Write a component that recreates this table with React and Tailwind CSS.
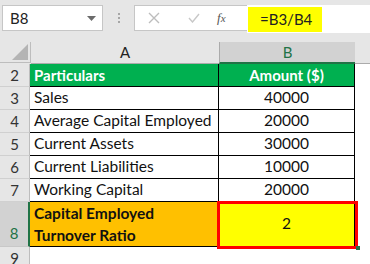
import React from "react";

const rows = [
  { n: "3", a: "Sales", b: "40000" },
  { n: "4", a: "Average Capital Employed", b: "20000" },
  { n: "5", a: "Current Assets", b: "30000" },
  { n: "6", a: "Current Liabilities", b: "10000" },
  { n: "7", a: "Working Capital", b: "20000" },
];

export default function App() {
  return (
    <div
      className="relative w-[370px] h-[264px] overflow-hidden bg-white text-black"
      style={{ fontFamily: "Lato, 'Open Sans', sans-serif" }}
    >
      {/* Top formula bar */}
      <div className="h-[42px] bg-[#e6e6e6] flex items-start pt-[5px]">
        <div className="ml-[2px] w-[101px] h-[26px] bg-white border border-[#c6c6c6] flex items-center justify-between pl-[7px] pr-[6px]">
          <span className="text-[15px] text-[#222] leading-none">B8</span>
          <svg width="9" height="5" viewBox="0 0 9 5">
            <path d="M0 0 L9 0 L4.5 5 Z" fill="#6b6b6b" />
          </svg>
        </div>
        <div className="w-[31px] h-[26px] flex flex-col items-center justify-center gap-[2px]">
          <div className="w-[2px] h-[2px] bg-[#a6a6a6]" />
          <div className="w-[2px] h-[2px] bg-[#a6a6a6]" />
          <div className="w-[2px] h-[2px] bg-[#a6a6a6]" />
        </div>
        <div className="w-[113px] h-[26px] bg-white border border-[#c6c6c6] border-r-0 flex items-center">
          <svg width="12" height="12" viewBox="0 0 12 12" className="ml-[13px]">
            <path d="M1 1 L11 11 M11 1 L1 11" stroke="#bdbdbd" strokeWidth="1.4" />
          </svg>
          <svg width="12" height="10" viewBox="0 0 12 10" className="ml-[28px]">
            <path d="M1 5 L4.5 9 L11 1" stroke="#c8c8c8" strokeWidth="1.4" fill="none" />
          </svg>
          <span
            className="ml-[17px] text-[13px] italic text-[#555]"
            style={{ fontFamily: "'Liberation Serif', serif" }}
          >
            f<span className="text-[11px]">x</span>
          </span>
        </div>
        <div className="flex-1 h-[28px] bg-white flex items-stretch">
          <div className="w-[74px] bg-[#ffff00] ml-[1px] mt-[2px] mb-[1px] flex items-center pl-[12px]">
            <span className="text-[15px] text-[#222] leading-none">=B3/B4</span>
          </div>
        </div>
      </div>

      {/* Column headers */}
      <div className="flex h-[22px] bg-[#e6e6e6]">
        <div className="w-[31px] h-[21px] border-r border-[#bdbdbd] border-b relative">
          <svg width="16" height="16" viewBox="0 0 16 16" className="absolute right-[2px] bottom-[2px]">
            <path d="M16 0 L16 16 L0 16 Z" fill="#b4b4b4" />
          </svg>
        </div>
        <div className="w-[188px] h-[22px] border-b border-[#ababab] flex items-center justify-center text-[15px] text-[#222]">
          A
        </div>
        <div className="w-[136px] h-[22px] bg-[#d2d2d2] border-l border-[#ababab] border-b-2 border-b-[#217346] flex items-center justify-center text-[15px] text-[#217346]">
          B
        </div>
        <div className="flex-1 border-b border-[#ababab]" />
      </div>

      {/* Row 2 header */}
      <div className="flex h-[23px]">
        <RowHead n="2" />
        <div className="w-[189px] bg-[#00b050] border-r border-b border-black flex items-center pl-[4px] text-[15px] font-bold text-white">
          Particulars
        </div>
        <div className="w-[136px] bg-[#00b050] border-r border-b border-black flex items-center justify-center text-[15px] font-bold text-white">
          Amount ($)
        </div>
      </div>

      {rows.map((r) => (
        <div key={r.n} className="flex h-[23px]">
          <RowHead n={r.n} />
          <div className="w-[189px] border-r border-b border-black flex items-center pl-[4px] text-[15.5px] text-[#111]">
            {r.a}
          </div>
          <div className="w-[136px] border-r border-b border-black flex items-center justify-center text-[15.5px] text-[#111]">
            {r.b}
          </div>
        </div>
      ))}

      {/* Row 8 */}
      <div className="flex h-[45px]">
        <div className="w-[30px] bg-[#d2d2d2] border-r-2 border-[#217346] border-b border-b-[#c8c8c8] flex items-end justify-center pb-[2px] text-[15px] text-[#217346]">
          8
        </div>
        <div className="w-[189px] bg-[#ffc000] border-r border-b border-black flex flex-col justify-center pl-[4px] text-[15.5px] font-bold text-[#111] leading-[22px]">
          <span>Capital Employed</span>
          <span>Turnover Ratio</span>
        </div>
        <div className="w-[136px] bg-[#ffff00] border-r border-b border-black flex items-center justify-center text-[15.5px] text-[#111]">
          2
        </div>
      </div>

      {/* Row 9 */}
      <div className="flex h-[23px]">
        <RowHead n="9" />
      </div>

      {/* Selection border */}
      <div className="absolute left-[217px] top-[201px] w-[141px] h-[48px] border-[3px] border-[#ff0000]" />
      <div className="absolute left-[356px] top-[246px] w-[4px] h-[4px] bg-[#217346]" />
    </div>
  );
}

function RowHead({ n }) {
  return (
    <div className="w-[30px] bg-[#e6e6e6] border-r border-[#bdbdbd] border-b border-b-[#d0d0d0] flex items-center justify-center text-[15px] text-[#333]">
      {n}
    </div>
  );
}
